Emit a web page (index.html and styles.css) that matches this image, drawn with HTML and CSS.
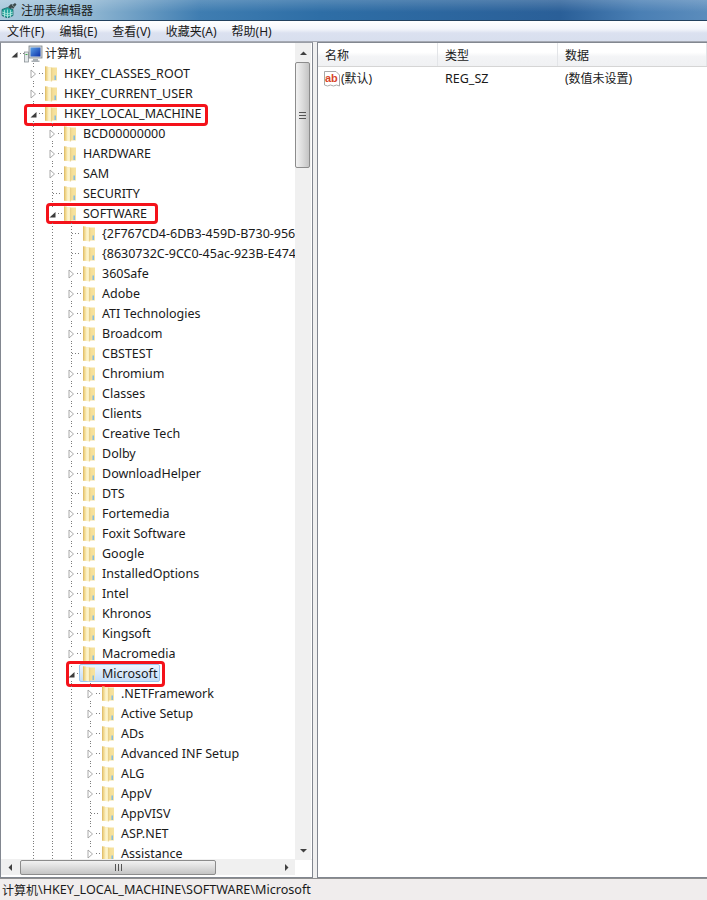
FILE: index.html
```html
<!DOCTYPE html>
<html lang="zh-CN">
<head>
<meta charset="utf-8">
<title>注册表编辑器</title>
<link rel="stylesheet" href="styles.css">
</head>
<body>
<svg class="defs" width="0" height="0" aria-hidden="true">
  <defs>
    <linearGradient id="fl" x1="0" y1="0" x2="1" y2="0">
      <stop offset="0" stop-color="#e6c56e"/><stop offset=".25" stop-color="#f0d68a"/><stop offset=".6" stop-color="#fdf5cf"/><stop offset="1" stop-color="#fbeebb"/>
    </linearGradient>
    <linearGradient id="fr" x1="0" y1="0" x2="1" y2="0">
      <stop offset="0" stop-color="#f0d687"/><stop offset="1" stop-color="#f7e3a0"/>
    </linearGradient>
    <linearGradient id="scr" x1="0" y1="0" x2="1" y2="1">
      <stop offset="0" stop-color="#5aa0e8"/><stop offset="1" stop-color="#0a2fa8"/>
    </linearGradient>
    <symbol id="folder" viewBox="0 0 12 16">
      <path d="M0 .5h2.500l1 1H12v13H0z" fill="url(#fr)"/>
      <path d="M0 .5l6.600 1.200V15.500L0 14.500z" fill="url(#fl)"/>
      <path d="M6.600 1.700V15.500" stroke="#d9b765" stroke-width=".5" fill="none"/>
      <path d="M0 .5v14" stroke="#d6b264" stroke-width=".8" fill="none"/>
      <path d="M9.500 9.500h1.400v4.500H9.500z" fill="#7dbae3"/>
    </symbol>
    <symbol id="open" viewBox="0 0 9 10"><path d="M2 1l4.500 4L2 9z" fill="#fff" stroke="#a0a0a0" stroke-width=".9"/></symbol>
    <symbol id="down" viewBox="0 0 9 10"><path d="M7.500 3v5.500H1.500z" fill="#3c3c3c"/></symbol>
  </defs>
</svg>
<div class="window">
  <header class="titlebar">
    <svg class="appicon" viewBox="0 0 16 16" width="16" height="16">
      <path d="M1 7.500l5.500-2 5.500 2v6l-5.500 2.500L1 13.500z" fill="#27a7a0" stroke="#0f5a58" stroke-width=".7"/>
      <path d="M1 10l5.500 2 5.500-2M1 12l5.500 2 5.500-2M3.500 8v7M6.500 7.500V16M9.500 8v7" stroke="#c9f2ea" stroke-width=".7" fill="none"/>
      <path d="M7 5l3-3 2 1-2 4zM10 4l4-3 1.500 1.500L12 7z" fill="#3c4a4c"/>
      <path d="M11 3l3 2.500" stroke="#a8b8b8" stroke-width=".7"/>
    </svg>
    <span class="title">注册表编辑器</span>
  </header>
  <nav class="menubar">
    <span>文件(F)</span><span>编辑(E)</span><span>查看(V)</span><span>收藏夹(A)</span><span>帮助(H)</span>
  </nav>
  <main class="panes">
    <section class="treepane">
      <div class="treeview">
        <ul class="tree">
          <li class="row root"><span class="exp top"><svg><use href="#down"/></svg></span><svg class="pc" viewBox="0 0 19 18"><rect x=".5" y="7" width="4" height="10" fill="#e4e8ea" stroke="#7f878c" stroke-width=".7"/><rect x="1.500" y="9" width="2" height="1" fill="#3fae4a"/><rect x="5" y="1" width="13" height="12" fill="#d6dade" stroke="#7a8288" stroke-width=".8"/><rect x="6.500" y="2.500" width="10" height="9" fill="url(#scr)"/><path d="M9 14h5v1.500h1.500V17H7.500v-1.500H9z" fill="#aab0b5"/></svg><span class="label cjk">计算机</span></li>

          <li class="row"><span class="exp"><svg><use href="#open"/></svg></span><svg class="fo"><use href="#folder"/></svg><span class="label">HKEY_CLASSES_ROOT</span></li>
          <li class="row"><span class="exp"><svg><use href="#open"/></svg></span><svg class="fo"><use href="#folder"/></svg><span class="label">HKEY_CURRENT_USER</span></li>
          <li class="row"><span class="exp"><svg><use href="#down"/></svg></span><svg class="fo"><use href="#folder"/></svg><span class="label">HKEY_LOCAL_MACHINE</span><i class="mark mark-hklm"></i></li>

          <li class="row"><i class="g"></i><span class="exp"><svg><use href="#open"/></svg></span><svg class="fo"><use href="#folder"/></svg><span class="label">BCD00000000</span></li>
          <li class="row"><i class="g"></i><span class="exp"><svg><use href="#open"/></svg></span><svg class="fo"><use href="#folder"/></svg><span class="label">HARDWARE</span></li>
          <li class="row"><i class="g"></i><span class="exp"><svg><use href="#open"/></svg></span><svg class="fo"><use href="#folder"/></svg><span class="label">SAM</span></li>
          <li class="row"><i class="g"></i><span class="exp leaf"></span><svg class="fo"><use href="#folder"/></svg><span class="label">SECURITY</span></li>
          <li class="row"><i class="g"></i><span class="exp"><svg><use href="#down"/></svg></span><svg class="fo"><use href="#folder"/></svg><span class="label">SOFTWARE</span><i class="mark mark-soft"></i></li>

          <li class="row"><i class="g"></i><i class="g"></i><span class="exp leaf"></span><svg class="fo"><use href="#folder"/></svg><span class="label">{2F767CD4-6DB3-459D-B730-956EC5F5F2AB}</span></li>
          <li class="row"><i class="g"></i><i class="g"></i><span class="exp leaf"></span><svg class="fo"><use href="#folder"/></svg><span class="label">{8630732C-9CC0-45ac-923B-E4748B5D1E2C}</span></li>
          <li class="row"><i class="g"></i><i class="g"></i><span class="exp"><svg><use href="#open"/></svg></span><svg class="fo"><use href="#folder"/></svg><span class="label">360Safe</span></li>
          <li class="row"><i class="g"></i><i class="g"></i><span class="exp"><svg><use href="#open"/></svg></span><svg class="fo"><use href="#folder"/></svg><span class="label">Adobe</span></li>
          <li class="row"><i class="g"></i><i class="g"></i><span class="exp"><svg><use href="#open"/></svg></span><svg class="fo"><use href="#folder"/></svg><span class="label">ATI Technologies</span></li>
          <li class="row"><i class="g"></i><i class="g"></i><span class="exp"><svg><use href="#open"/></svg></span><svg class="fo"><use href="#folder"/></svg><span class="label">Broadcom</span></li>
          <li class="row"><i class="g"></i><i class="g"></i><span class="exp leaf"></span><svg class="fo"><use href="#folder"/></svg><span class="label">CBSTEST</span></li>
          <li class="row"><i class="g"></i><i class="g"></i><span class="exp"><svg><use href="#open"/></svg></span><svg class="fo"><use href="#folder"/></svg><span class="label">Chromium</span></li>
          <li class="row"><i class="g"></i><i class="g"></i><span class="exp"><svg><use href="#open"/></svg></span><svg class="fo"><use href="#folder"/></svg><span class="label">Classes</span></li>
          <li class="row"><i class="g"></i><i class="g"></i><span class="exp"><svg><use href="#open"/></svg></span><svg class="fo"><use href="#folder"/></svg><span class="label">Clients</span></li>
          <li class="row"><i class="g"></i><i class="g"></i><span class="exp"><svg><use href="#open"/></svg></span><svg class="fo"><use href="#folder"/></svg><span class="label">Creative Tech</span></li>
          <li class="row"><i class="g"></i><i class="g"></i><span class="exp"><svg><use href="#open"/></svg></span><svg class="fo"><use href="#folder"/></svg><span class="label">Dolby</span></li>
          <li class="row"><i class="g"></i><i class="g"></i><span class="exp"><svg><use href="#open"/></svg></span><svg class="fo"><use href="#folder"/></svg><span class="label">DownloadHelper</span></li>
          <li class="row"><i class="g"></i><i class="g"></i><span class="exp leaf"></span><svg class="fo"><use href="#folder"/></svg><span class="label">DTS</span></li>
          <li class="row"><i class="g"></i><i class="g"></i><span class="exp"><svg><use href="#open"/></svg></span><svg class="fo"><use href="#folder"/></svg><span class="label">Fortemedia</span></li>
          <li class="row"><i class="g"></i><i class="g"></i><span class="exp"><svg><use href="#open"/></svg></span><svg class="fo"><use href="#folder"/></svg><span class="label">Foxit Software</span></li>
          <li class="row"><i class="g"></i><i class="g"></i><span class="exp"><svg><use href="#open"/></svg></span><svg class="fo"><use href="#folder"/></svg><span class="label">Google</span></li>
          <li class="row"><i class="g"></i><i class="g"></i><span class="exp"><svg><use href="#open"/></svg></span><svg class="fo"><use href="#folder"/></svg><span class="label">InstalledOptions</span></li>
          <li class="row"><i class="g"></i><i class="g"></i><span class="exp"><svg><use href="#open"/></svg></span><svg class="fo"><use href="#folder"/></svg><span class="label">Intel</span></li>
          <li class="row"><i class="g"></i><i class="g"></i><span class="exp"><svg><use href="#open"/></svg></span><svg class="fo"><use href="#folder"/></svg><span class="label">Khronos</span></li>
          <li class="row"><i class="g"></i><i class="g"></i><span class="exp"><svg><use href="#open"/></svg></span><svg class="fo"><use href="#folder"/></svg><span class="label">Kingsoft</span></li>
          <li class="row"><i class="g"></i><i class="g"></i><span class="exp"><svg><use href="#open"/></svg></span><svg class="fo"><use href="#folder"/></svg><span class="label">Macromedia</span></li>
          <li class="row"><i class="g"></i><i class="g"></i><span class="exp"><svg><use href="#down"/></svg></span><span class="selected"><svg class="fo"><use href="#folder"/></svg><span class="label">Microsoft</span></span><i class="mark mark-ms"></i></li>

          <li class="row"><i class="g"></i><i class="g"></i><i class="g"></i><span class="exp"><svg><use href="#open"/></svg></span><svg class="fo"><use href="#folder"/></svg><span class="label">.NETFramework</span></li>
          <li class="row"><i class="g"></i><i class="g"></i><i class="g"></i><span class="exp"><svg><use href="#open"/></svg></span><svg class="fo"><use href="#folder"/></svg><span class="label">Active Setup</span></li>
          <li class="row"><i class="g"></i><i class="g"></i><i class="g"></i><span class="exp"><svg><use href="#open"/></svg></span><svg class="fo"><use href="#folder"/></svg><span class="label">ADs</span></li>
          <li class="row"><i class="g"></i><i class="g"></i><i class="g"></i><span class="exp"><svg><use href="#open"/></svg></span><svg class="fo"><use href="#folder"/></svg><span class="label">Advanced INF Setup</span></li>
          <li class="row"><i class="g"></i><i class="g"></i><i class="g"></i><span class="exp"><svg><use href="#open"/></svg></span><svg class="fo"><use href="#folder"/></svg><span class="label">ALG</span></li>
          <li class="row"><i class="g"></i><i class="g"></i><i class="g"></i><span class="exp"><svg><use href="#open"/></svg></span><svg class="fo"><use href="#folder"/></svg><span class="label">AppV</span></li>
          <li class="row"><i class="g"></i><i class="g"></i><i class="g"></i><span class="exp leaf"></span><svg class="fo"><use href="#folder"/></svg><span class="label">AppVISV</span></li>
          <li class="row"><i class="g"></i><i class="g"></i><i class="g"></i><span class="exp"><svg><use href="#open"/></svg></span><svg class="fo"><use href="#folder"/></svg><span class="label">ASP.NET</span></li>
          <li class="row"><i class="g"></i><i class="g"></i><i class="g"></i><span class="exp"><svg><use href="#open"/></svg></span><svg class="fo"><use href="#folder"/></svg><span class="label">Assistance</span></li>
        </ul>
        <div class="vscroll">
          <span class="sbtn up"><svg viewBox="0 0 9 9" width="9" height="9"><path d="M4.500 2.500L8 6H1z" fill="#404040"/></svg></span>
          <div class="vtrack"><div class="vthumb"><span class="grip-h"></span></div></div>
          <span class="sbtn"><svg viewBox="0 0 9 9" width="9" height="9"><path d="M4.500 6.500L8 3H1z" fill="#404040"/></svg></span>
        </div>
      </div>
      <div class="hscroll">
        <span class="hbtn left"><svg viewBox="0 0 9 9" width="9" height="9"><path d="M2.500 4.500L6 1v7z" fill="#404040"/></svg></span>
        <div class="hthumb"><span class="grip-v"></span></div>
        <div class="hrest"></div>
        <span class="hbtn right"><svg viewBox="0 0 9 9" width="9" height="9"><path d="M6.500 4.500L3 1v7z" fill="#404040"/></svg></span>
        <span class="corner"></span>
      </div>
    </section>
    <section class="listpane">
      <div class="listhead">
        <span class="col c1">名称</span><span class="col c2">类型</span><span class="col c3">数据</span>
      </div>
      <div class="listrow">
        <span class="c1 name">
          <svg class="ab" viewBox="0 0 16 16" width="16" height="16"><path d="M.5 .5h11.500l3.500 3.500v11l-3-1-3 1-3-1-3 1-3-1z" fill="#fff" stroke="#a9a9a9"/><text x="1" y="10.500" class="abtext">ab</text></svg>
          (默认)
        </span>
        <span class="c2 latin">REG_SZ</span>
        <span class="c3">(数值未设置)</span>
      </div>
    </section>
  </main>
  <footer class="status"><span class="cjk">计算机</span>\HKEY_LOCAL_MACHINE\SOFTWARE\Microsoft</footer>
</div>
</body>
</html>
```
FILE: styles.css
```css
* { box-sizing: border-box; }
html, body { margin: 0; padding: 0; }
body {
  width: 707px;
  height: 900px;
  overflow: hidden;
  font-family: "Noto Sans", "Noto Sans CJK SC", sans-serif;
  font-size: 12px;
  color: #1a1a1a;
}
.defs { position: absolute; }
.window { display: flex; flex-direction: column; height: 900px; background: #f0f0f0; }

.titlebar {
  height: 21px;
  flex: none;
  display: flex;
  align-items: center;
  gap: 4px;
  padding: 0 0 1px 1px;
  border-bottom: 1px solid #23425f;
  background:
    linear-gradient(180deg, rgba(255,255,255,.18), rgba(255,255,255,0) 60%),
    linear-gradient(90deg, #a9c8dc 0, #8fb6d2 90px, #3f7db1 200px, #2e6ea6 320px, #2a5f98 560px, #4a7fb4 640px, #5b8cbc 707px);
}
.title { color: #1b1b1b; font-size: 12px; }
.appicon { flex: none; }

.menubar {
  height: 21px;
  flex: none;
  display: flex;
  align-items: center;
  gap: 15px;
  padding: 0 0 0 7px;
  background: linear-gradient(180deg, #ffffff 0, #f4f6fb 40%, #dbe1f0 60%, #d8dfee 100%);
  border-bottom: 1px solid #a5a9b3;
}

.panes { flex: 1; min-height: 0; display: flex; background: #f0f0f0; }

.treepane {
  width: 313px;
  flex: none;
  display: flex;
  flex-direction: column;
  border: 1px solid #828790;
  border-top-color: #9a9ea6;
  background: #fff;
}
.treeview { flex: 1; min-height: 0; display: flex; }
.tree {
  list-style: none;
  margin: 0;
  padding: 0;
  flex: 1;
  min-width: 0;
  overflow: hidden;
}
.row {
  position: relative;
  height: 20px;
  display: flex;
  align-items: center;
  padding-left: 23px;
  white-space: nowrap;
  font-size: 12.5px;
}
.root { padding-left: 4px; }

.g {
  flex: none;
  width: 19px;
  height: 20px;
  background: repeating-linear-gradient(180deg, #7c7c7c 0 1px, transparent 1px 3px) 9px 0 / 1px 100% no-repeat;
}
.exp {
  flex: none;
  width: 19px;
  height: 20px;
  padding: 1px 0 0 5px;
  display: flex;
  align-items: center;
  background:
    repeating-linear-gradient(90deg, #7c7c7c 0 1px, transparent 1px 3px) 15px 10px / 4px 1px no-repeat,
    repeating-linear-gradient(180deg, #7c7c7c 0 1px, transparent 1px 3px) 9px 0 / 1px 100% no-repeat;
}
.exp.top {
  background: repeating-linear-gradient(90deg, #7c7c7c 0 1px, transparent 1px 3px) 15px 10px / 4px 1px no-repeat;
}
.exp.leaf {
  background:
    repeating-linear-gradient(90deg, #7c7c7c 0 1px, transparent 1px 3px) 10px 10px / 9px 1px no-repeat,
    repeating-linear-gradient(180deg, #7c7c7c 0 1px, transparent 1px 3px) 9px 0 / 1px 100% no-repeat;
}
.exp svg { width: 9px; height: 10px; background: #fff; }
.fo { flex: none; width: 12px; height: 16px; margin: 2px 0 0 2px; }
.pc { flex: none; width: 19px; height: 18px; margin: 2px 0 0 0; }
.label {
  margin-left: 5px;
  padding: 0 2px;
  line-height: 17px;
  color: #1a1a1a;
}
.cjk { font-size: 12px; }
.root .label { margin-left: 0; }
.selected {
  display: flex;
  align-items: center;
  height: 18px;
  margin: 0 0 0 -2px;
  padding: 0 0 0 1px;
  background: linear-gradient(180deg, #edf5fe, #c5def8);
  border: 1px solid #9cc7ef;
  border-radius: 2px;
}
.selected .fo { margin-top: 1px; }
.mark {
  position: absolute;
  border: 3px solid #f4121a;
  border-radius: 4px;
}
.mark-hklm { left: 23px; width: 184px; top: 1px; height: 22px; }
.mark-soft { left: 45px; width: 112px; top: 0; height: 21px; }
.mark-ms { left: 65px; width: 99px; top: -2px; height: 26px; }

.vscroll {
  flex: none;
  width: 17px;
  display: flex;
  flex-direction: column;
  background: #f0f0f0;
  border-right: 1px solid #fff;
}
.sbtn { flex: none; height: 18px; display: flex; align-items: center; justify-content: center; }
.sbtn.up { height: 19px; padding-top: 1px; }
.vtrack { flex: 1; min-height: 0; padding: 0 1px 0 0; background: #f0f0f0; }
.vthumb {
  height: 106px;
  display: flex;
  align-items: center;
  justify-content: center;
  border: 1px solid #8c8c8c;
  border-radius: 2px;
  background: linear-gradient(90deg, #f2f2f2, #dcdcdc 50%, #c4c4c4);
}
.grip-h {
  width: 7px;
  height: 7px;
  background: repeating-linear-gradient(180deg, #555 0 1px, transparent 1px 3px);
}
.hscroll {
  flex: none;
  height: 18px;
  display: flex;
  background: #f0f0f0;
  border-top: 1px solid #f0f0f0;
  border-bottom: 2px solid #fff;
}
.hbtn { flex: none; display: flex; align-items: center; justify-content: center; }
.hbtn.left { width: 19px; }
.hbtn.right { width: 18px; }
.hthumb {
  flex: none;
  width: 196px;
  display: flex;
  align-items: center;
  justify-content: center;
  border: 1px solid #8c8c8c;
  border-radius: 2px;
  background: linear-gradient(180deg, #f2f2f2, #dcdcdc 50%, #c4c4c4);
}
.grip-v {
  width: 7px;
  height: 7px;
  background: repeating-linear-gradient(90deg, #555 0 1px, transparent 1px 3px);
}
.hrest { flex: 1; }
.corner { flex: none; width: 17px; background: #fff; }

.listpane {
  flex: 1;
  min-width: 0;
  margin-left: 4px;
  border: 1px solid #828790;
  border-right: 0;
  background: #fff;
}
.listhead {
  height: 24px;
  display: flex;
  align-items: center;
  background: linear-gradient(180deg, #fff 0 40%, #f3f4f6 60%, #f0f1f3);
  border-bottom: 1px solid #d5d5d5;
}
.col { height: 100%; display: flex; align-items: center; border-right: 1px solid #e3e5e8; }
.listrow { height: 20px; margin-top: 1px; display: flex; align-items: center; }
.c1 { width: 120px; flex: none; padding-left: 7px; }
.c2 { width: 120px; flex: none; padding-left: 7px; }
.c3 { flex: 1; padding-left: 7px; }
.latin { font-size: 12.5px; }
.name { display: flex; align-items: center; gap: 1px; padding-left: 6px; }
.ab { flex: none; margin-top: 2px; }
.abtext { font: bold 11px "Liberation Sans", sans-serif; fill: #d8452a; }

.status {
  height: 22px;
  flex: none;
  display: flex;
  align-items: center;
  padding-left: 2px;
  font-size: 12.6px;
  background: #f0eded;
  border-top: 1px solid #8f8f8f;
}
```
